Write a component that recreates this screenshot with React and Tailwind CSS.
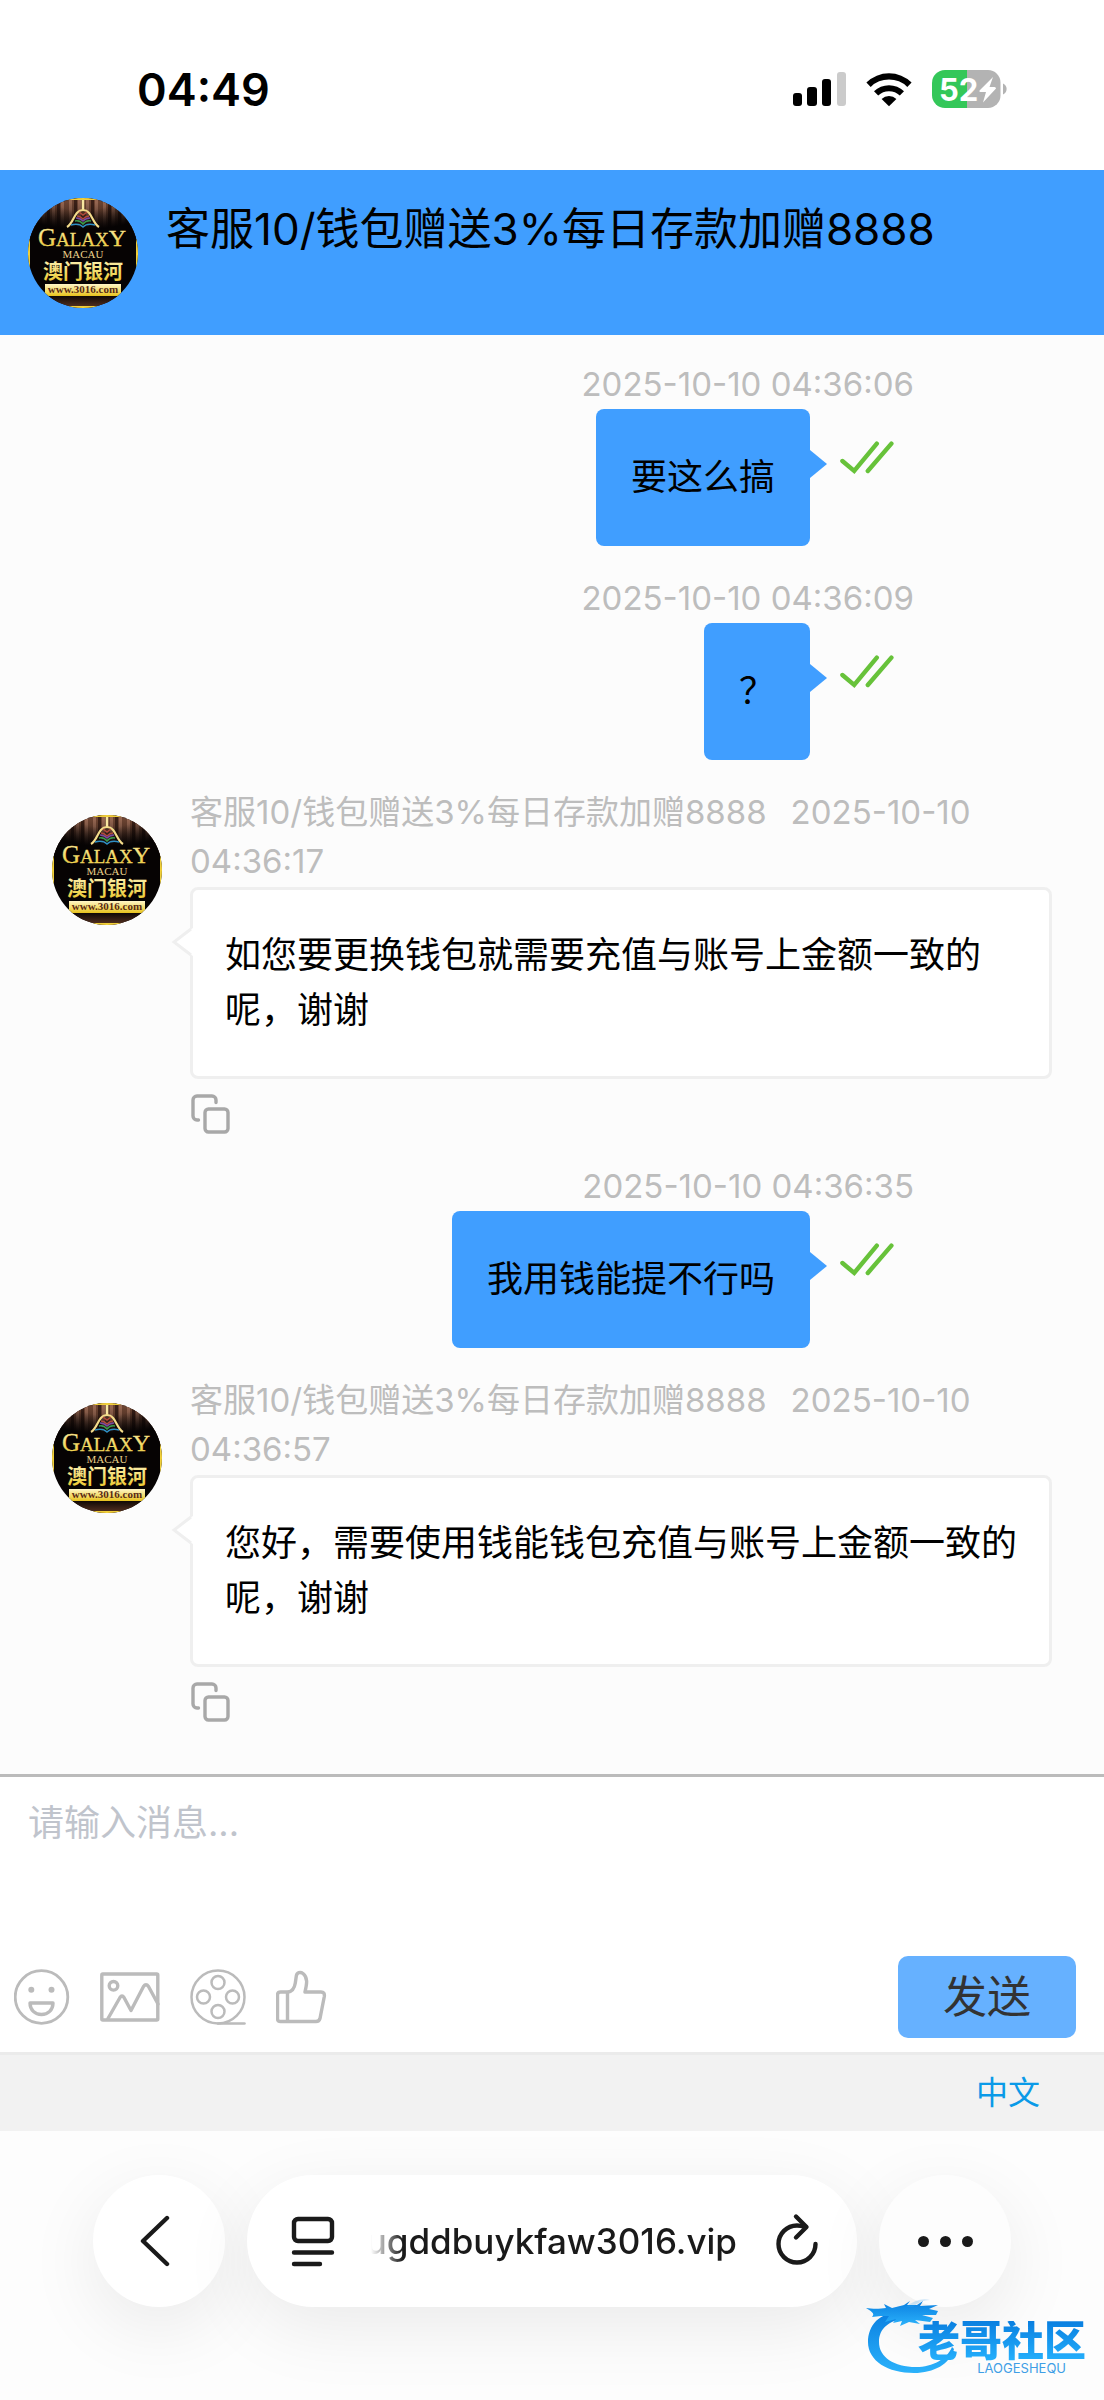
import React, { useId, useState } from "react";

const AGENT_NAME = "客服10/钱包赠送3%每日存款加赠8888";

const MESSAGES = [
  { id: 1, from: "me", date: "2025-10-10", clock: "04:36:06", text: "要这么搞" },
  { id: 2, from: "me", date: "2025-10-10", clock: "04:36:09", text: "？" },
  {
    id: 3,
    from: "agent",
    date: "2025-10-10",
    clock: "04:36:17",
    text: "如您要更换钱包就需要充值与账号上金额一致的呢，谢谢",
  },
  {
    id: 4,
    from: "me",
    date: "2025-10-10",
    clock: "04:36:35",
    text: "我用钱能提不行吗",
  },
  {
    id: 5,
    from: "agent",
    date: "2025-10-10",
    clock: "04:36:57",
    text: "您好，需要使用钱能钱包充值与账号上金额一致的呢，谢谢",
  },
];

function Avatar() {
  const id = useId();
  return (
    <svg
      viewBox="0 0 110 110"
      className="size-[110px] shrink-0"
      role="img"
      aria-label="Galaxy Macau"
    >
      <defs>
        <clipPath id={`${id}-clip`}>
          <circle cx="55" cy="55" r="55" />
        </clipPath>
        <linearGradient id={`${id}-gold`} x1="0" y1="0" x2="0" y2="1">
          <stop offset="0" stopColor="#fff6c8" />
          <stop offset="0.55" stopColor="#f3dc6a" />
          <stop offset="1" stopColor="#e8c21c" />
        </linearGradient>
        <linearGradient id={`${id}-fade`} x1="0" y1="0" x2="0" y2="1">
          <stop offset="0.1" stopColor="#060303" stopOpacity="0" />
          <stop offset="1" stopColor="#060303" />
        </linearGradient>
        <radialGradient id={`${id}-side`} cx="0.5" cy="0" r="0.7">
          <stop offset="0.4" stopColor="#060303" stopOpacity="0" />
          <stop offset="1" stopColor="#060303" />
        </radialGradient>
        <linearGradient id={`${id}-floor`} x1="0" y1="0" x2="0" y2="1">
          <stop offset="0" stopColor="#0a0503" />
          <stop offset="1" stopColor="#5a3423" />
        </linearGradient>
      </defs>
      <g clipPath={`url(#${id}-clip)`}>
        <rect width="110" height="110" fill="#060303" />
        {/* curtain */}
        <rect width="110" height="44" fill="#6b4331" />
        {[14, 24, 33, 41, 50, 58, 67, 75, 84, 94].map((x) => (
          <rect key={x} x={x} width="3" height="44" fill="#946550" />
        ))}
        {[19, 29, 46, 63, 80, 90].map((x) => (
          <rect key={x} x={x} width="3" height="44" fill="#3a2017" />
        ))}
        <rect width="110" height="45" fill={`url(#${id}-fade)`} />
        <rect width="110" height="45" fill={`url(#${id}-side)`} />
        <rect y="97" width="110" height="13" fill={`url(#${id}-floor)`} />
        {/* crest */}
        <path d="M55 2V13" stroke="#f8e7a0" strokeWidth="2.500" />
        <path
          d="M39 29C46 25 46 12 55 12S64 25 71 29"
          fill="none"
          stroke="#f3dc8a"
          strokeWidth="2.200"
        />
        <g fill="none" strokeWidth="1.500">
          <path d="M51 14l4 3 4-3M49 18q3 0 6 3 3-3 6-3" stroke="#b34a3c" />
          <path d="M48 20q4 0 7 3 3-3 7-3" stroke="#7a4aa0" />
          <path d="M47 23q5-1 8 3 3-4 8-3" stroke="#3c9a4c" />
          <path d="M43 27q8-2 12 2 4-4 12-2" stroke="#2f8fc4" />
        </g>
        <text
          x="54"
          y="48"
          textAnchor="middle"
          fontFamily="Liberation Serif, serif"
          fontSize="19"
          fill={`url(#${id}-gold)`}
          stroke="#f3dc6a"
          strokeWidth="0.300"
        >
          <tspan fontSize="25">G</tspan>
          <tspan>ALAX</tspan>
          <tspan fontSize="24">Y</tspan>
        </text>
        <text
          x="55"
          y="60"
          textAnchor="middle"
          fontFamily="Liberation Serif, serif"
          fontSize="11"
          fill="#ead28a"
        >
          MACAU
        </text>
        <text
          x="55"
          y="81"
          textAnchor="middle"
          fontFamily="Noto Sans CJK SC, sans-serif"
          fontWeight="700"
          fontSize="20"
          fill={`url(#${id}-gold)`}
        >
          澳门银河
        </text>
        <rect x="17" y="86" width="76" height="12" fill={`url(#${id}-gold)`} />
        <text
          x="55"
          y="95"
          textAnchor="middle"
          fontFamily="Liberation Serif, serif"
          fontWeight="700"
          fontSize="11"
          fill="#5a2a14"
        >
          www.3016.com
        </text>
        <rect
          x="0.500"
          y="0.500"
          width="109"
          height="109"
          fill="none"
          stroke="#f0cf3a"
          strokeWidth="3"
        />
      </g>
    </svg>
  );
}

function StatusBar() {
  return (
    <div className="flex h-[170px] items-start justify-between pt-[62px] pr-24 pl-[137px]">
      <span className="text-[45px] leading-[56px] font-semibold text-black">04:49</span>
      <div className="flex items-center gap-5 pt-2">
        <svg width="54" height="38" viewBox="0 0 54 38" aria-label="信号">
          <rect x="1" y="23" width="9" height="13" rx="3" />
          <rect x="15" y="17" width="10" height="19" rx="3" />
          <rect x="30" y="9" width="9" height="27" rx="3" />
          <rect x="45" y="2" width="9" height="34" rx="3" fill="#cbcbcb" />
        </svg>
        <svg width="46" height="38" viewBox="0 0 46 38" aria-label="Wi-Fi">
          <path d="M23 36.300L15.600 28.900a10.600 10.600 0 0 1 14.800 0z" />
          <path d="M8 21.300a21.400 21.400 0 0 1 30 0l-4.200 4.300a15.300 15.300 0 0 0-21.600 0z" />
          <path d="M.4 12.500a32.300 32.300 0 0 1 45.200 0l-4.300 4.400a26.100 26.100 0 0 0-36.600 0z" />
        </svg>
        <svg width="76" height="38" viewBox="0 0 76 38" aria-label="电量 52%">
          <path d="M13 0H35V38H13A13 13 0 0 1 0 25V13A13 13 0 0 1 13 0z" fill="#34c759" />
          <path d="M35 0H56A12.500 12.500 0 0 1 68.500 12.500V25.500A12.500 12.500 0 0 1 56 38H35z" fill="#b3b3b3" />
          <path d="M71 13.500a6 6 0 0 1 0 11z" fill="#b3b3b3" />
          <text
            x="7"
            y="31"
            fontFamily="Inter, sans-serif"
            fontWeight="700"
            fontSize="31"
            fill="#fff"
          >
            52
          </text>
          <path d="M61 7L47.500 20.500Q47 22 48.500 22H54L51 32.500 64 18.500Q64 17 62.500 17H57.500z" fill="#fff" />
        </svg>
      </div>
    </div>
  );
}

function ReadMark() {
  return (
    <svg
      width="56"
      height="34"
      viewBox="0 0 56 34"
      fill="none"
      stroke="#67c23a"
      strokeWidth="4.400"
      strokeLinecap="round"
      className="mt-8 ml-7 shrink-0"
      aria-label="已读"
    >
      <path d="M4.400 20L16.200 30 38.800 2.600" />
      <path d="M29.800 30L53.400 2.600" />
    </svg>
  );
}

function SentMessage({ message }) {
  return (
    <li className="flex flex-col items-end">
      <time className="pr-[190px] text-[33px] leading-[49px] text-[#bdbdbd]">
        {message.date} {message.clock}
      </time>
      <div className="flex items-start pr-[210px]">
        <div className="relative rounded-lg bg-[#409eff] px-[35px] py-[41px] text-[36px] leading-[55px] text-black">
          {message.text}
          <svg
            width="17"
            height="28"
            viewBox="0 0 17 28"
            className="absolute top-[41px] left-full"
            aria-hidden="true"
          >
            <path d="M0 0L17 14 0 28z" fill="#409eff" />
          </svg>
        </div>
        <ReadMark />
      </div>
    </li>
  );
}

function ReceivedMessage({ message }) {
  return (
    <li className="flex gap-7 px-[52px]">
      <div className="pt-[27px]">
        <Avatar />
      </div>
      <div className="min-w-0 flex-1">
        <div className="flex flex-wrap text-[33px] leading-[49px] text-[#bdbdbd]">
          <span className="mr-6">{AGENT_NAME}</span>
          <span className="mr-2">{message.date}</span>
          <span>{message.clock}</span>
        </div>
        <div className="relative mt-px rounded-lg border-3 border-[#efefef] bg-white py-[38px] pr-7 pl-8 text-[36px] leading-[55px] text-black">
          {message.text}
          <svg
            width="22"
            height="30"
            viewBox="0 0 22 30"
            fill="none"
            className="absolute top-[37px] -left-[22px]"
            aria-hidden="true"
          >
            <path d="M22 1L2 15 22 29z" fill="#fff" />
            <path d="M20 2L3 15 20 28" stroke="#efefef" strokeWidth="3" />
          </svg>
        </div>
        <button type="button" aria-label="复制" className="mt-[15px] block">
          <svg
            width="40"
            height="40"
            viewBox="0 0 40 40"
            fill="none"
            stroke="#a8a8a8"
            strokeWidth="3.400"
            strokeLinecap="round"
          >
            <path d="M8.500 26H7a4 4 0 0 1-4-4V6a4 4 0 0 1 4-4h15a4 4 0 0 1 4 4v2.500" />
            <rect x="15" y="15" width="23" height="23" rx="3.500" />
          </svg>
        </button>
      </div>
    </li>
  );
}

const iconProps = {
  height: 56,
  fill: "none",
  stroke: "#bbb",
  strokeLinecap: "round",
  strokeLinejoin: "round",
};

function Toolbar() {
  return (
    <div className="flex items-center gap-[30px]">
      <button type="button" aria-label="表情">
        <svg {...iconProps} width="56" viewBox="0 0 56 56" strokeWidth="2.800">
          <circle cx="27.500" cy="28" r="26.300" />
          <circle cx="17.300" cy="20.700" r="3" fill="#bbb" stroke="none" />
          <circle cx="37.500" cy="20.700" r="3" fill="#bbb" stroke="none" />
          <path d="M16 34h23c0 7-5 11.500-11.500 11.500S16 41 16 34z" strokeWidth="3.400" />
        </svg>
      </button>
      <button type="button" aria-label="图片">
        <svg {...iconProps} width="60" viewBox="0 0 60 56" strokeWidth="3.400">
          <rect x="1.800" y="5" width="56" height="46" rx="1" />
          <circle cx="13.500" cy="16.800" r="4.300" />
          <path d="M8 49.500L20 28.500Q22 25.500 24 28.500L31 41.500 43.500 17.500Q46 14 48.500 17.500L58 35" />
        </svg>
      </button>
      <button type="button" aria-label="视频">
        <svg {...iconProps} width="56" viewBox="0 0 56 56" strokeWidth="2.500">
          <circle cx="28" cy="28" r="26.500" />
          <circle cx="28" cy="13.500" r="6.500" />
          <circle cx="13.500" cy="28" r="6.500" />
          <circle cx="42.500" cy="28" r="6.500" />
          <circle cx="28" cy="42.500" r="6.500" />
          <path d="M28 54.600H54.500" />
        </svg>
      </button>
      <button type="button" aria-label="评价">
        <svg {...iconProps} width="52" viewBox="0 0 52 56" strokeWidth="3.400">
          <path d="M4.500 23H12c4-.5 6.500-4 7.300-9l1-7c.5-3.500 4-4.500 6.700-2.500 5 4 4 10 2 18.500H45q4 0 3.300 4.500L44 49.500q-.8 3-4 3H4.500q-3 0-3-3V26q0-3 3-3z" />
          <path d="M11.500 23.500V52" />
        </svg>
      </button>
    </div>
  );
}

function SiteMark() {
  return (
    <div className="absolute right-[18px] bottom-[25px] flex w-[220px] flex-col items-end">
      <svg
        viewBox="0 0 94 76"
        width="94"
        height="76"
        className="absolute bottom-0 left-0"
        aria-hidden="true"
      >
        <defs>
          <linearGradient id="dragon" x1="0" y1="0" x2="0" y2="1">
            <stop offset="0" stopColor="#0a7fe0" />
            <stop offset="1" stopColor="#2bb2fb" />
          </linearGradient>
        </defs>
        <g fill="url(#dragon)">
          <path d="M37 13C14 12 2 26 2 43c0 19 20 31 46 31 20 0 36-9 40-24l-2-2C81 60 67 68 50 68 28 68 13 58 13 43c0-13 9-22 29-24z" />
          <path d="M0 9c6 1 14 1 20 0l-2-4 8 4 12-3 6-4-3 4 10 0 6-4-3 5 18-1-9 4 9 2-2 4-14 0 11 3-3 4-15-2 5 4-11-2-9 4 2-5-9 2 3-4-11 3 4-6-8 0-9 1C10 14 4 12 0 9z" />
          <path d="M40 8q12-10 24-7-10 0-17 7z" opacity="0.200" />
        </g>
      </svg>
      <span className="relative bg-linear-to-b from-[#0a7fe0] to-[#25b0fc] bg-clip-text text-[42px] leading-[40px] font-black text-transparent">
        老哥社区
      </span>
      <span className="relative pr-5 text-[13px] leading-[14px] text-[#3f9fe6]">
        LAOGESHEQU
      </span>
    </div>
  );
}

function BrowserBar() {
  const shadow = "shadow-[0_20px_72px_rgba(0,0,0,0.08)]";
  return (
    <nav className="relative flex flex-1 items-start gap-[22px] overflow-hidden bg-[#fdfdfd] px-[93px] pt-11 pb-[92px]">
      <button
        type="button"
        aria-label="返回"
        className={`flex size-[132px] shrink-0 items-center justify-center rounded-full bg-white pr-2 ${shadow}`}
      >
        <svg
          width="32"
          height="52"
          viewBox="0 0 32 52"
          fill="none"
          stroke="#1a1a1a"
          strokeWidth="4.400"
          strokeLinecap="round"
          strokeLinejoin="round"
        >
          <path d="M28 3L4 26 28 49" />
        </svg>
      </button>
      <div
        className={`flex h-[132px] min-w-0 flex-1 items-center rounded-full bg-white pr-[38px] pl-11 ${shadow}`}
      >
        <button type="button" aria-label="页面菜单" className="shrink-0">
          <svg
            width="44"
            height="52"
            viewBox="0 0 44 52"
            fill="none"
            stroke="#1a1a1a"
            strokeWidth="4.400"
            strokeLinecap="round"
          >
            <rect x="3" y="4" width="38" height="22" rx="4" />
            <path d="M3 37.500H41M3 49H29" />
          </svg>
        </button>
        <a
          href="#address"
          className="ml-9 flex min-w-0 flex-1 justify-end overflow-hidden mask-[linear-gradient(to_right,transparent,black_32px)] text-[35px] leading-[48px] font-medium text-[#1a1a1a]"
        >
          ugddbuykfaw3016.vip
        </a>
        <button type="button" aria-label="刷新" className="ml-[38px] shrink-0">
          <svg
            width="44"
            height="54"
            viewBox="0 0 44 54"
            fill="none"
            stroke="#1a1a1a"
            strokeWidth="4.400"
            strokeLinecap="round"
            strokeLinejoin="round"
            className="mb-1"
          >
            <path d="M40.500 32A18.500 18.500 0 1 1 22 13.500q4 0 8 1.500" />
            <path d="M21 4.500L31.500 15 21 25.500" />
          </svg>
        </button>
      </div>
      <button
        type="button"
        aria-label="更多"
        className={`flex size-[132px] shrink-0 items-center justify-center gap-[11px] rounded-full bg-[#fdfdfd] ${shadow}`}
      >
        <span className="size-[11px] rounded-full bg-[#1a1a1a]" />
        <span className="size-[11px] rounded-full bg-[#1a1a1a]" />
        <span className="size-[11px] rounded-full bg-[#1a1a1a]" />
      </button>
      <SiteMark />
    </nav>
  );
}

export default function App() {
  const [draft, setDraft] = useState("");

  return (
    <div className="flex min-h-screen flex-col bg-white font-['Inter','Noto_Sans_CJK_SC',sans-serif]">
      <StatusBar />

      {/* Header */}
      <header className="flex items-start gap-7 bg-[#409eff] px-7 pt-7 pb-[27px]">
        <Avatar />
        <h1 className="text-[44px] leading-[62px] text-black">{AGENT_NAME}</h1>
      </header>

      {/* Messages */}
      <main className="bg-[#fcfcfc] pt-[25px] pb-[52px]">
        <ul className="flex flex-col gap-7">
          {MESSAGES.map((message) =>
            message.from === "me" ? (
              <SentMessage key={message.id} message={message} />
            ) : (
              <ReceivedMessage key={message.id} message={message} />
            )
          )}
        </ul>
      </main>

      {/* Composer */}
      <form
        className="border-t-3 border-[#bbb] bg-white pb-[14px]"
        onSubmit={(e) => e.preventDefault()}
      >
        <textarea
          rows={3}
          aria-label="消息"
          placeholder="请输入消息..."
          value={draft}
          onChange={(e) => setDraft(e.target.value)}
          className="block w-full resize-none px-7 pt-5 text-[36px] leading-[53px] outline-none placeholder:text-[#c0c4cc]"
        />
        <div className="flex items-center justify-between pr-7 pl-[14px]">
          <Toolbar />
          <button
            type="submit"
            className="rounded-[10px] bg-[#66b1ff] px-[45px] py-[11px] text-[44px] leading-[60px] text-[#333]"
          >
            发送
          </button>
        </div>
      </form>

      <footer className="flex justify-end border-t-3 border-[#ebebeb] bg-[#f2f2f2] pt-[14px] pr-16 pb-[14px]">
        <a href="#language" className="text-[32px] leading-[48px] text-[#0a9ae8]">
          中文
        </a>
      </footer>

      <BrowserBar />
    </div>
  );
}
